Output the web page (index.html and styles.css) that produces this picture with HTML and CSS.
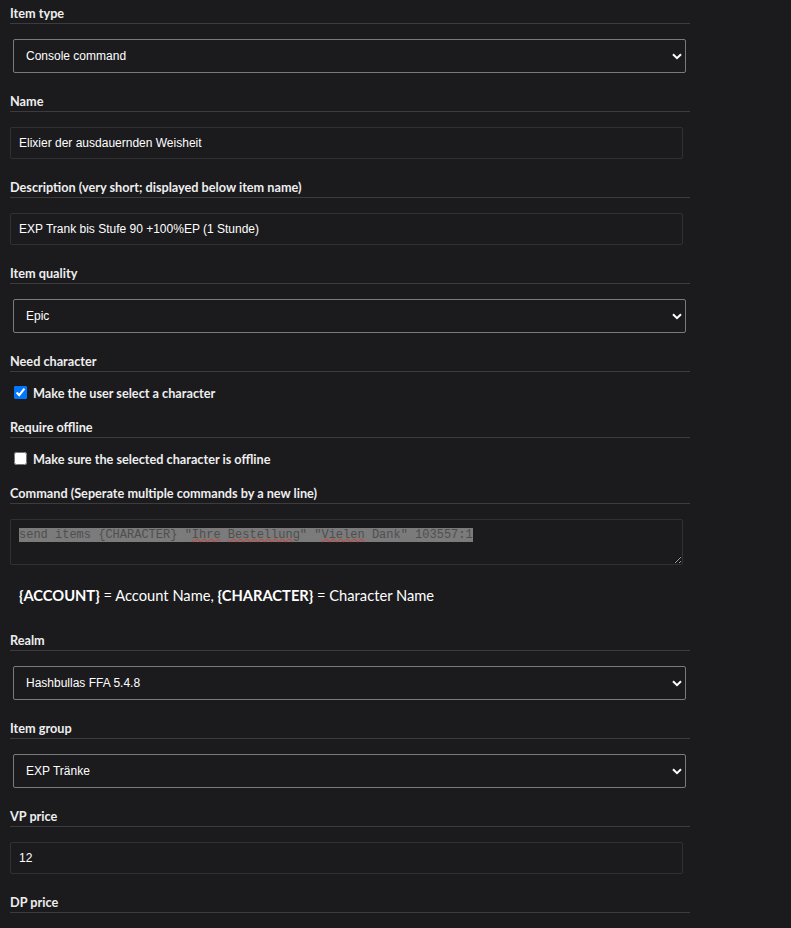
FILE: index.html
```html
<!DOCTYPE html>
<html lang="en">
<head>
	<meta charset="UTF-8">
	<title>Store item</title>
	<link rel="stylesheet" href="styles.css">
</head>
<body>
	<form class="item-form">
		<div class="group">
			<label class="head" for="itemType">Item type</label>
			<div class="select-wrap">
				<select id="itemType">
					<option>Console command</option>
					<option>Item</option>
				</select>
				<svg class="chevron" width="10" height="7" viewBox="0 0 10 7"><path d="M1 1.2 L5 5.2 L9 1.2" fill="none" stroke="#fff" stroke-width="2"/></svg>
			</div>
		</div>

		<div class="group">
			<label class="head" for="itemName">Name</label>
			<input class="text" type="text" id="itemName" value="Elixier der ausdauernden Weisheit">
		</div>

		<div class="group">
			<label class="head" for="itemDesc">Description (very short; displayed below item name)</label>
			<input class="text" type="text" id="itemDesc" value="EXP Trank bis Stufe 90 +100%EP (1 Stunde)">
		</div>

		<div class="group">
			<label class="head" for="itemQuality">Item quality</label>
			<div class="select-wrap">
				<select id="itemQuality">
					<option>Epic</option>
					<option>Rare</option>
				</select>
				<svg class="chevron" width="10" height="7" viewBox="0 0 10 7"><path d="M1 1.2 L5 5.2 L9 1.2" fill="none" stroke="#fff" stroke-width="2"/></svg>
			</div>
		</div>

		<div class="group group-check">
			<div class="head">Need character</div>
			<label class="check">
				<input type="checkbox" checked>
				<span>Make the user select a character</span>
			</label>
		</div>

		<div class="group group-check">
			<div class="head">Require offline</div>
			<label class="check">
				<input type="checkbox">
				<span>Make sure the selected character is offline</span>
			</label>
		</div>

		<div class="group group-command">
			<div class="head">Command (Seperate multiple commands by a new line)</div>
			<div class="command" contenteditable="true" spellcheck="false"><span class="sel">send items {CHARACTER} "<span class="typo">Ihre</span> <span class="typo">Bestellung</span>" "<span class="typo">Vielen</span> Dank" 103557:1</span></div>
			<p class="hint"><b>{ACCOUNT}</b> = Account Name, <b>{CHARACTER}</b> = Character Name</p>
		</div>

		<div class="group">
			<label class="head" for="itemRealm">Realm</label>
			<div class="select-wrap">
				<select id="itemRealm">
					<option>Hashbullas FFA 5.4.8</option>
				</select>
				<svg class="chevron" width="10" height="7" viewBox="0 0 10 7"><path d="M1 1.2 L5 5.2 L9 1.2" fill="none" stroke="#fff" stroke-width="2"/></svg>
			</div>
		</div>

		<div class="group">
			<label class="head" for="itemGroup">Item group</label>
			<div class="select-wrap">
				<select id="itemGroup">
					<option>EXP Tränke</option>
				</select>
				<svg class="chevron" width="10" height="7" viewBox="0 0 10 7"><path d="M1 1.2 L5 5.2 L9 1.2" fill="none" stroke="#fff" stroke-width="2"/></svg>
			</div>
		</div>

		<div class="group">
			<label class="head" for="vpPrice">VP price</label>
			<input class="text" type="text" id="vpPrice" value="12">
		</div>

		<div class="group">
			<label class="head" for="dpPrice">DP price</label>
			<input class="text" type="text" id="dpPrice" value="0">
		</div>
	</form>
</body>
</html>
```

FILE: styles.css
```css
body{
	margin: 0;
	padding: 3px 0 0 10px;
	background: #1b1b1e;
	color: #f2f2f2;
	font-family: Lato, "Noto Sans", sans-serif;
}
.item-form{
	width: 680px;
}
.group{
	margin-bottom: 18px;
}
.head{
	display: block;
	font-size: 12.7px;
	font-weight: 700;
	line-height: 20px;
	color: #eeeeee;
	border-bottom: 1px solid #3c3c3f;
	margin-bottom: 15px;
}
.select-wrap{
	position: relative;
	width: 673px;
	margin-left: 3px;
}
select{
	-webkit-appearance: none;
	appearance: none;
	display: block;
	box-sizing: border-box;
	width: 100%;
	height: 34px;
	margin: 0;
	padding: 0 30px 0 12px;
	background: #1b1b1e;
	color: #fff;
	border: 1px solid #7a7a7a;
	border-radius: 2px;
	font: 12px "Liberation Sans", Arial, sans-serif;
	outline: none;
}
.chevron{
	position: absolute;
	right: 4px;
	top: 50%;
	margin-top: -3px;
	pointer-events: none;
}
.text{
	display: block;
	box-sizing: border-box;
	width: 673px;
	height: 32px;
	margin: 0;
	padding: 0 8px;
	background: #1b1b1e;
	color: #fff;
	border: 1px solid #313134;
	border-radius: 2px;
	font: 12px "Liberation Sans", Arial, sans-serif;
	outline: none;
}
.group-check .head{
	margin-bottom: 14px;
}
.check{
	display: flex;
	align-items: center;
	height: 13px;
	font-size: 12.7px;
	font-weight: 700;
	color: #eeeeee;
}
.check input{
	width: 13px;
	height: 13px;
	margin: 0 6px 0 4px;
}
.command{
	box-sizing: border-box;
	width: 673px;
	height: 46px;
	padding: 8px 8px;
	border: 1px solid #313134;
	border-radius: 2px;
	font: 12px/14px "Liberation Mono", "Courier New", monospace;
	color: #4f4f4f;
	white-space: pre;
	overflow: auto;
	resize: vertical;
	color-scheme: dark;
	outline: none;
}
.sel{
	background: #7b7b7b;
}
.typo{
	text-decoration: underline wavy #e0352f;
	text-decoration-thickness: 1px;
	text-underline-offset: 0;
}
.hint{
	margin: 20px 0 25px;
	padding-left: 9px;
	font-size: 14.7px;
	line-height: 20px;
	color: #fff;
}
.hint b{
	font-weight: 700;
}
```
